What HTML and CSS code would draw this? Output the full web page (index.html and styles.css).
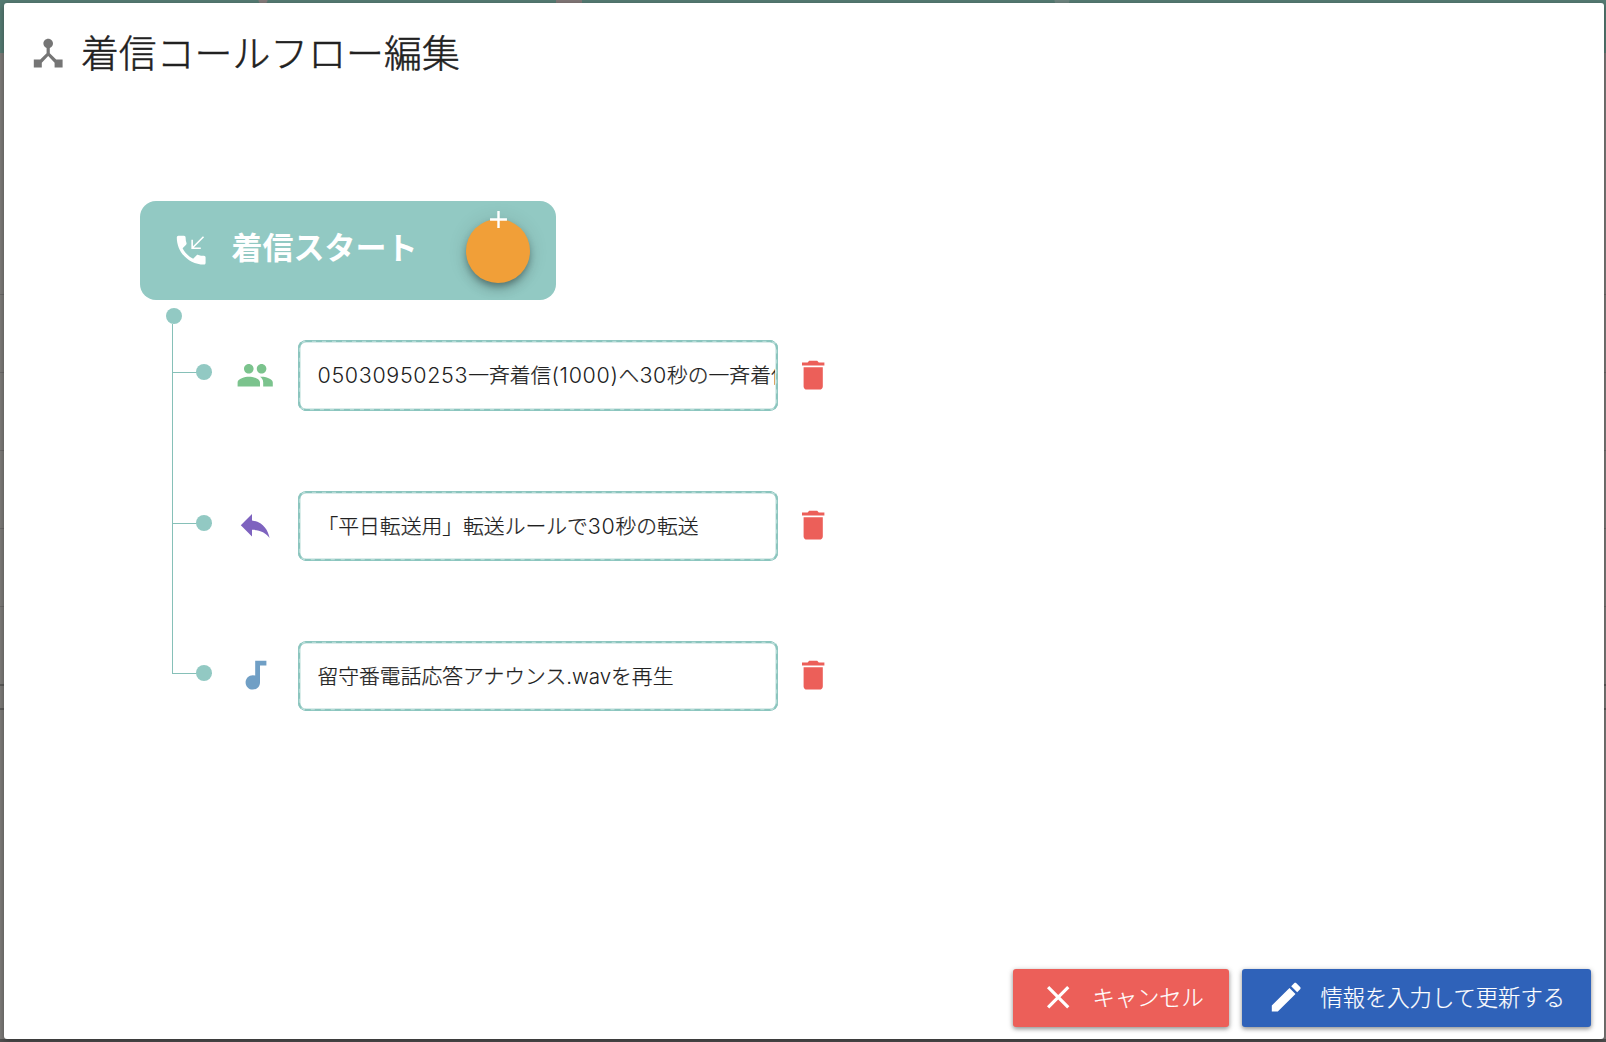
FILE: index.html
```html
<!DOCTYPE html>
<html lang="ja">
<head>
<meta charset="utf-8">
<title>着信コールフロー編集</title>
<link rel="stylesheet" href="styles.css">
</head>
<body>
<main class="dialog">
  <header class="dialog-header">
    <svg class="icon icon-hub" viewBox="0 0 24 24"><path d="M17 16l-4-4V8.82C14.16 8.4 15 7.3 15 6c0-1.66-1.34-3-3-3S9 4.34 9 6c0 1.3.84 2.4 2 2.82V12l-4 4H3v5h5v-3.05l4-4.2 4 4.2V21h5v-5h-4z"/></svg>
    <h1 class="title">着信コールフロー編集</h1>
  </header>
  <section class="flow">
    <div class="start">
      <svg class="icon phone" viewBox="0 0 24 24"><path d="M20 15.5c-1.25 0-2.45-.2-3.57-.57-.35-.11-.74-.03-1.02.24l-2.2 2.2c-2.83-1.44-5.15-3.75-6.59-6.59l2.2-2.21c.28-.26.36-.65.25-1C8.7 6.45 8.5 5.25 8.5 4c0-.55-.45-1-1-1H4c-.55 0-1 .45-1 1 0 9.39 7.61 17 17 17 .55 0 1-.45 1-1v-3.5c0-.55-.45-1-1-1z"/><path class="thin-stroke" d="M19.7 3.6l-7 7M12.6 5.4v5.4H18"/></svg>
      <span class="start-label">着信スタート</span>
      <button class="fab" aria-label="追加"><svg class="fab-plus" viewBox="0 0 24 24"><path d="M19 13h-6v6h-2v-6H5v-2h6V5h2v6h6z"/></svg></button>
    </div>
    <div class="dot root-dot"></div>
    <ul class="branches">
      <li class="branch">
        <div class="connector"><i class="dot"></i></div>
        <div class="step">
          <svg class="icon group" viewBox="0 0 24 24"><path d="M16 11c1.66 0 2.99-1.34 2.99-3S17.66 5 16 5s-3 1.34-3 3 1.34 3 3 3zm-8 0c1.66 0 2.99-1.34 2.99-3S9.66 5 8 5 5 6.34 5 8s1.34 3 3 3zm0 2c-2.33 0-7 1.17-7 3.5V19h14v-2.5c0-2.33-4.67-3.5-7-3.5zm8 0c-.29 0-.62.02-.97.05 1.16.84 1.97 1.97 1.97 3.45V19h6v-2.5c0-2.33-4.67-3.5-7-3.5z"/></svg>
          <div class="box"><span class="box-text"><span class="num">05030950253</span>一斉着信<span class="num">(1000)</span>へ<span class="num">30</span>秒の一斉着信</span></div>
          <svg class="icon trash" viewBox="0 0 24 24"><path d="M6 19c0 1.1.9 2 2 2h8c1.1 0 2-.9 2-2V7H6v12zM19 4h-3.500l-1-1h-5l-1 1H5v2h14V4z"/></svg>
        </div>
      </li>
      <li class="branch">
        <div class="connector"><i class="dot"></i></div>
        <div class="step">
          <svg class="icon reply" viewBox="0 0 24 24"><path d="M10 9V5l-7 7 7 7v-4.100c5 0 8.500 1.600 11 5.100-1-5-4-10-11-11z"/></svg>
          <div class="box"><span class="box-text">「平日転送用」転送ルールで<span class="num">30</span>秒の転送</span></div>
          <svg class="icon trash" viewBox="0 0 24 24"><path d="M6 19c0 1.1.9 2 2 2h8c1.1 0 2-.9 2-2V7H6v12zM19 4h-3.500l-1-1h-5l-1 1H5v2h14V4z"/></svg>
        </div>
      </li>
      <li class="branch">
        <div class="connector"><i class="dot"></i></div>
        <div class="step">
          <svg class="icon music" viewBox="0 0 24 24"><path d="M12 3v9.260A4.500 4.500 0 0 0 10.500 12C8 12 6 14 6 16.500S8 21 10.500 21 15 19 15 16.500V6h4V3z"/></svg>
          <div class="box"><span class="box-text">留守番電話応答アナウンス<span class="latin">.wav</span>を再生</span></div>
          <svg class="icon trash" viewBox="0 0 24 24"><path d="M6 19c0 1.1.9 2 2 2h8c1.1 0 2-.9 2-2V7H6v12zM19 4h-3.500l-1-1h-5l-1 1H5v2h14V4z"/></svg>
        </div>
      </li>
    </ul>
  </section>
  <footer class="actions">
    <button class="btn cancel"><svg class="icon" viewBox="0 0 24 24"><path d="M19 6.410L17.590 5 12 10.590 6.410 5 5 6.410 10.590 12 5 17.590 6.410 19 12 13.410 17.590 19 19 17.590 13.410 12z"/></svg><span>キャンセル</span></button>
    <button class="btn update"><svg class="icon" viewBox="0 0 24 24"><path d="M3 17.250V21h3.750L17.810 9.940l-3.750-3.750L3 17.250zM20.710 7.040c.39-.39.39-1.020 0-1.410l-2.340-2.340c-.39-.39-1.020-.39-1.410 0l-1.830 1.830 3.750 3.750 1.830-1.830z"/></svg><span>情報を入力して更新する</span></button>
  </footer>
</main>
</body>
</html>
```
FILE: styles.css
```css
* { box-sizing: border-box; }
html, body { height: 100%; margin: 0; }
body {
  padding: 3px 2px 3px 4px;
  overflow: hidden;
  font-family: "Noto Sans CJK JP", sans-serif;
  font-weight: 300;
  color: #212121;
  background:
    radial-gradient(circle at 263px 0, #857b7b 4px, transparent 5px),
    linear-gradient(#827777, #827777) 556px 0 / 26px 3px no-repeat,
    radial-gradient(circle at 1062px 0, #6f8580 7px, transparent 8px),
    linear-gradient(#505050, #505050) 0 1039px / 100% 3px no-repeat,
    linear-gradient(#5c5b5a, #5c5b5a) 0 684px / 100% 2px no-repeat,
    linear-gradient(#5c5b5a, #5c5b5a) 0 708px / 100% 2px no-repeat,
    linear-gradient(#6c6a69, #6c6a69) 0 294px / 100% 1px no-repeat,
    linear-gradient(#6c6a69, #6c6a69) 0 372px / 100% 1px no-repeat,
    linear-gradient(#6c6a69, #6c6a69) 0 450px / 100% 1px no-repeat,
    linear-gradient(#6c6a69, #6c6a69) 0 528px / 100% 1px no-repeat,
    linear-gradient(#6c6a69, #6c6a69) 0 606px / 100% 1px no-repeat,
    linear-gradient(#557b73 53px, #7d7b79 53px);
}
button { border: 0; padding: 0; font: inherit; color: #fff; }
.icon { width: 38.4px; height: 38.4px; flex: none; fill: currentColor; display: block; }
.dialog {
  height: 1036px;
  display: flex;
  flex-direction: column;
  background: #fff;
  border-radius: 3px;
  box-shadow: 0 2px 6px rgba(0, 0, 0, .35);
}
.dialog-header { display: flex; padding: 31.4px 0 0 25.4px; height: 198px; }
.icon-hub { color: #757575; }
.title {
  margin: -11.9px 0 0 13.1px;
  font-size: 37.9px;
  font-weight: 300;
  line-height: 56px;
  -webkit-text-stroke: .5px currentColor;
}
.flow { flex: 1; padding-left: 136px; }
.start {
  width: 416px;
  height: 99px;
  padding: 0 25.6px 4px 32px;
  display: flex;
  align-items: center;
  border-radius: 16px;
  background: #92c9c3;
  color: #fff;
}
.phone { margin-top: 2.4px; }
.start-label { margin: -5px 0 0 21px; font-size: 31px; font-weight: 700; line-height: 44px; flex: 1; }
.fab {
  width: 64px;
  height: 64px;
  margin-top: 5px;
  border-radius: 50%;
  background: #f19f38;
  display: flex;
  justify-content: center;
  box-shadow: 0 4px 6px -1px rgba(0, 0, 0, .28), 0 7px 12px rgba(0, 0, 0, .14), 0 1px 20px rgba(0, 0, 0, .12);
}
.fab-plus { width: 29px; height: 29px; margin-top: -14px; fill: #fff; flex: none; }
.thin-stroke { fill: none; stroke: #fff; stroke-width: 1; }
.dot { display: block; flex: none; width: 16px; height: 16px; border-radius: 50%; background: #92c9c3; }
.root-dot { margin: 8px 0 0 26px; }
.branches { margin: 0 0 0 32px; padding: 0; list-style: none; }
.branch { display: flex; align-items: flex-end; height: 150px; }
.branch:nth-child(1) { height: 49px; }
.branch:nth-child(2) { height: 151px; }
.connector {
  width: 40px;
  align-self: stretch;
  display: flex;
  justify-content: flex-end;
  align-items: flex-end;
  border: solid #86c0b8;
  border-width: 0 0 1px 1px;
}
.connector .dot { margin-bottom: -8px; }
.step { height: 70px; margin: 0 0 -37px 24px; display: flex; align-items: center; }
.branch:first-child .step { height: 71px; margin-bottom: -38px; }
.step .icon { margin-top: -1px; }
.group { color: #7bc38d; }
.reply { color: #7e63bf; }
.music { color: #709fc5; }
.trash { color: #ec5f59; margin-left: 16px; }
.box {
  width: 480px;
  height: 100%;
  margin-left: 23.600px;
  padding: 1px 2px 1px 1px;
  border: 1px solid #92c9c3;
  border-radius: 8px;
  outline: 2px dashed #8bc5be;
  outline-offset: -2px;
  box-shadow: inset 0 0 0 1.5px #b4dad5;
  overflow: hidden;
}
.box-text {
  display: block;
  padding-left: 17.5px;
  font-size: 20.800px;
  line-height: 65px;
  white-space: nowrap;
  overflow: hidden;
  -webkit-text-stroke: .25px currentColor;
}
.num { font-family: Inter, sans-serif; font-size: 21.5px; letter-spacing: .65px; -webkit-text-stroke: 0; }
.latin { font-family: Inter, sans-serif; font-size: 20.500px; -webkit-text-stroke: 0; }
.actions { display: flex; justify-content: flex-end; gap: 13px; padding: 0 13px 12px 0; }
.btn {
  height: 58px;
  display: flex;
  align-items: center;
  border-radius: 3px;
  font-size: 22.300px;
  box-shadow: 0 2px 4px rgba(0, 0, 0, .35), 0 1px 6px rgba(0, 0, 0, .15);
}
.cancel { width: 216px; padding-left: 26px; background: #ec5f59; }
.update { width: 349px; padding-left: 25px; background: #2f62b9; }
.btn .icon { margin-top: -1px; }
.btn span { margin: -4px 0 0 15px; -webkit-text-stroke: .2px currentColor; }
```
